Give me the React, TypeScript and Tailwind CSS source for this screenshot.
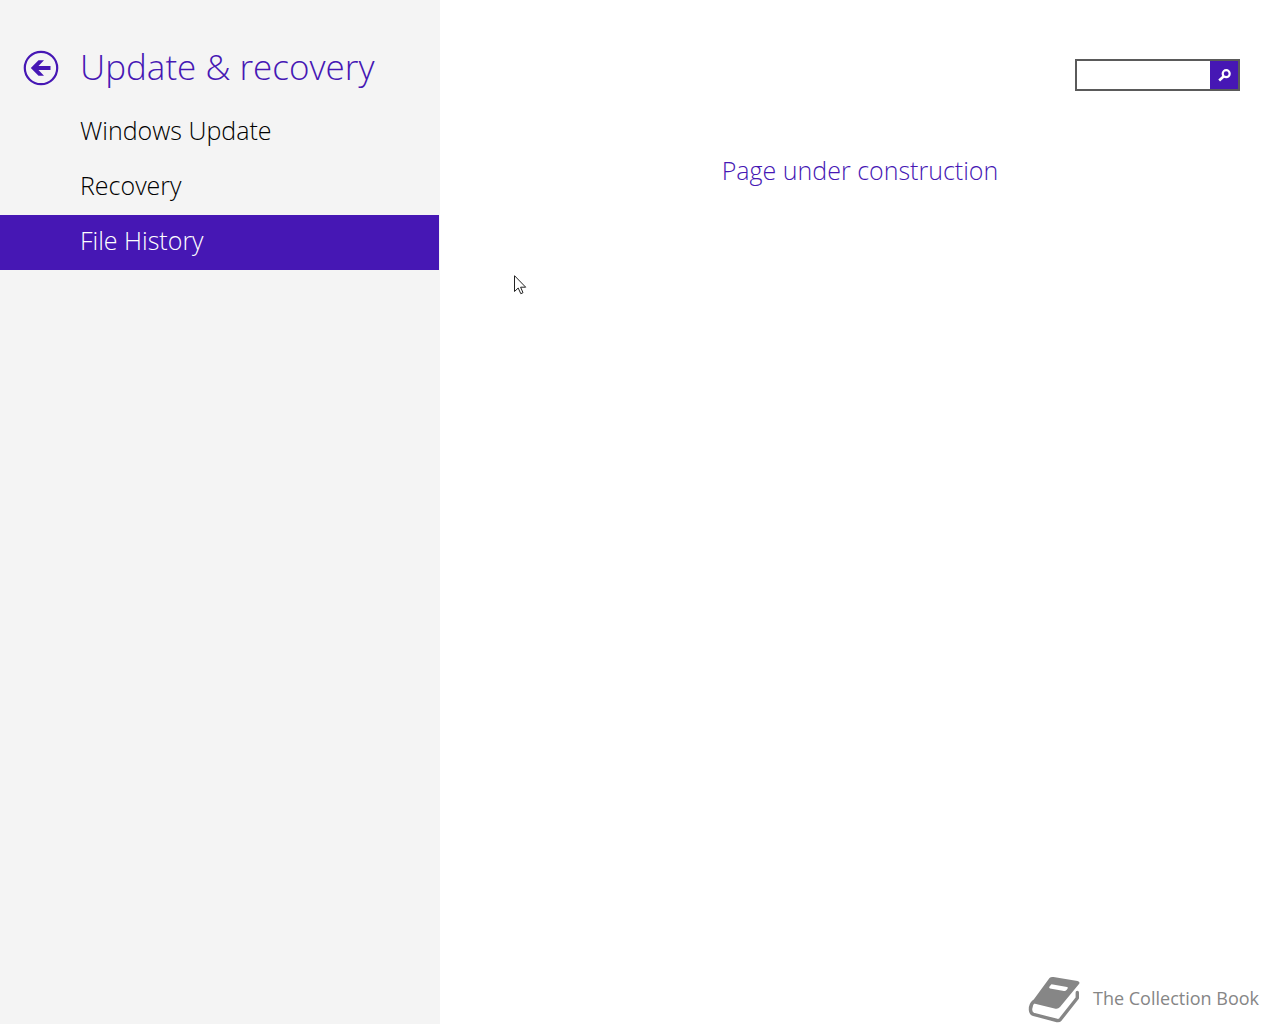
import { useState } from "react";

const pages = ["Windows Update", "Recovery", "File History"];

function BackIcon() {
  return (
    <svg viewBox="0 0 36 36" className="size-9" aria-hidden="true">
      <circle cx="18" cy="18" r="16.2" fill="none" stroke="#4617b4" strokeWidth="2.2" />
      <path d="M7.800 18 15.500 10.300h5.500L15.500 16H27.500v4H15.500l5.500 5.700h-5.500z" fill="#4617b4" />
    </svg>
  );
}

function SearchIcon() {
  return (
    <svg viewBox="0 0 14 14" className="size-3.5" fill="none" stroke="#fff" aria-hidden="true">
      <circle cx="9.200" cy="5.700" r="3.500" strokeWidth="2.200" />
      <path d="M6.800 8.200 2.200 12.500" strokeWidth="2.600" />
    </svg>
  );
}

function BookIcon() {
  return (
    <svg viewBox="0 0 52 48" className="h-12 w-13 shrink-0" aria-hidden="true">
      <path
        d="M21.500 2Q23 .5 25.500 1L49.500 5Q52.500 5.700 51 8L32 31Q30 33.300 27.500 32.700L6 27.500Q3.500 27 5 24.500z"
        fill="#868686"
      />
      <path d="M23.500 8.300 39 11Q40.500 11.400 39.500 12.700L38.500 14Q37.500 15.300 36 15L22 12.400Q20.500 12 21.500 10.500z" fill="#fff" />
      <path
        d="M5.800 25.500Q2.200 28.500 2.500 34Q2.800 37.500 5.500 38.300L29 44.500Q31 45 32.500 43.300L49.300 22V16.500"
        fill="none"
        stroke="#868686"
        strokeWidth="3.400"
        strokeLinecap="round"
        strokeLinejoin="round"
      />
    </svg>
  );
}

function Pointer() {
  return (
    <svg viewBox="0 0 13 20" className="pointer-events-none absolute top-[275px] left-[514px] h-5 w-[13px]" aria-hidden="true">
      <path d="M.5.7V16.500L4.200 13 6.800 18.700 9 17.700 6.600 12.200H11.700z" fill="#fff" stroke="#222" strokeWidth="1" />
    </svg>
  );
}

export default function App() {
  const [current, setCurrent] = useState("File History");
  return (
    <div className="relative flex min-h-screen bg-white font-['Open_Sans','Noto_Sans',sans-serif] font-light">
      <aside className="w-[440px] shrink-0 bg-[#f4f4f4] pt-10 pr-px">
        <header className="flex h-[65px] items-start pl-[23px]">
          <button type="button" aria-label="Back" className="mt-2.5 mr-[21px]">
            <BackIcon />
          </button>
          <h1 className="text-[35px] leading-[54px] whitespace-nowrap text-[#4617b4]">Update &amp; recovery</h1>
        </header>
        <nav className="flex flex-col">
          {pages.map((page) => (
            <button
              key={page}
              type="button"
              aria-current={page === current ? "page" : undefined}
              onClick={() => setCurrent(page)}
              className={
                page === current
                  ? "h-[55px] bg-[#4617b4] pb-1 pl-20 text-left text-[25px] text-white"
                  : "h-[55px] pb-1 pl-20 text-left text-[25px] text-black"
              }
            >
              {page}
            </button>
          ))}
        </nav>
      </aside>
      <main className="flex grow flex-col">
        <form className="mt-[59px] mr-10 flex h-8 w-[165px] self-end border-2 border-[#5a5a5a]" onSubmit={(e) => e.preventDefault()}>
          <input type="text" aria-label="Search" className="w-0 min-w-0 grow bg-white px-2 text-sm outline-none" />
          <button type="submit" aria-label="Search" className="flex w-7 shrink-0 items-center justify-center bg-[#4617b4]">
            <SearchIcon />
          </button>
        </form>
        <p className="mt-[59px] text-center text-[25px] leading-10 text-[#4617b4]">Page under construction</p>
        <footer className="mt-auto mr-[21px] flex items-center gap-[13px] self-end font-normal text-[#868686]">
          <BookIcon />
          <span className="pb-1 text-[18px]">The Collection Book</span>
        </footer>
      </main>
      <Pointer />
    </div>
  );
}
